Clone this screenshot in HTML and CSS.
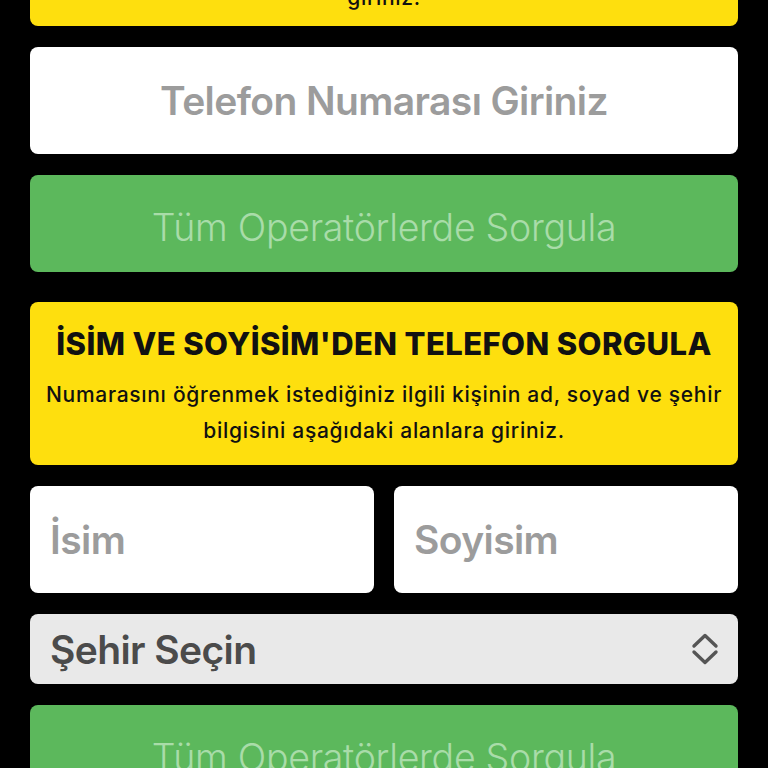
FILE: index.html
```html
<!DOCTYPE html>
<html lang="tr">
<head>
<meta charset="utf-8">
<title>Telefon Sorgula</title>
<link rel="stylesheet" href="styles.css">
</head>
<body>
<main class="page">
  <section class="card card-top">
    <h2 class="card-title">TELEFON NUMARASINDAN SORGULA</h2>
    <p class="card-text">Sorgulamak istediğiniz telefon numarasını aşağıdaki alana<br>giriniz.</p>
  </section>

  <input class="field field-center" type="text" placeholder="Telefon Numarası Giriniz">
  <button class="btn" type="button">Tüm Operatörlerde Sorgula</button>

  <section class="card card-second">
    <h2 class="card-title">İSİM VE SOYİSİM'DEN TELEFON SORGULA</h2>
    <p class="card-text">Numarasını öğrenmek istediğiniz ilgili kişinin ad, soyad ve şehir<br>bilgisini aşağıdaki alanlara giriniz.</p>
  </section>

  <div class="row">
    <input class="field" type="text" placeholder="İsim">
    <input class="field" type="text" placeholder="Soyisim">
  </div>

  <div class="select">
    <select class="select-input">
      <option>Şehir Seçin</option>
    </select>
    <svg class="select-icon" width="30" height="32" viewBox="0 0 30 32" aria-hidden="true">
      <path d="M4 13 L15 2.5 L26 13" fill="none" stroke="#555" stroke-width="3.4" stroke-linecap="round" stroke-linejoin="round"/>
      <path d="M4 19 L15 29.5 L26 19" fill="none" stroke="#555" stroke-width="3.4" stroke-linecap="round" stroke-linejoin="round"/>
    </svg>
  </div>

  <button class="btn" type="button">Tüm Operatörlerde Sorgula</button>
</main>
</body>
</html>
```

FILE: styles.css
```css
html, body {
  margin: 0;
  padding: 0;
  background: #000;
}

body {
  overflow: hidden;
  height: 768px;
}

.page {
  display: flex;
  flex-direction: column;
  gap: 21px;
  padding: 0 30px;
  margin-top: -131px;
}

.card {
  background: #fedf0e;
  border-radius: 8px;
  padding: 22px 4px 16px;
  text-align: center;
  color: #111;
  font-family: Inter, "Open Sans", sans-serif;
}

.card-top {
  padding-bottom: 10px;
}

.card-second {
  margin-top: 9px;
}

.card-title {
  margin: 0 0 13px;
  font-size: 31px;
  line-height: 40px;
  font-weight: 800;
  letter-spacing: 0.4px;
}

.card-text {
  margin: 0;
  font-size: 21px;
  line-height: 36px;
  font-weight: 500;
  letter-spacing: 0.7px;
}

.field {
  display: block;
  box-sizing: border-box;
  width: 100%;
  height: 107px;
  border: 0;
  border-radius: 8px;
  background: #fff;
  padding: 0 20px;
  font-family: Inter, "Open Sans", sans-serif;
  font-size: 39px;
  font-weight: 600;
  letter-spacing: -0.6px;
  color: #333;
  outline: none;
}

.field::placeholder {
  color: #9c9c9c;
  opacity: 1;
}

.field-center {
  text-align: center;
}

.row {
  display: grid;
  grid-template-columns: 1fr 1fr;
  gap: 20px;
}

.btn {
  display: block;
  width: 100%;
  height: 97px;
  border: 0;
  border-radius: 8px;
  background: #5cb85c;
  color: #a9dca9;
  font-family: Inter, Roboto, sans-serif;
  font-size: 37.5px;
  font-weight: 300;
  letter-spacing: -0.3px;
  padding: 8px 0 0;
}

.select {
  display: flex;
  align-items: center;
  height: 70px;
  border-radius: 8px;
  background: #e9e9e9;
  padding: 0 18px 0 0;
}

.select-input {
  flex: 1;
  height: 100%;
  appearance: none;
  -webkit-appearance: none;
  border: 0;
  background: transparent;
  padding: 0 20px;
  font-family: Inter, "Open Sans", sans-serif;
  font-size: 39px;
  font-weight: 600;
  letter-spacing: -0.6px;
  color: #4b4b4b;
  outline: none;
}

.select-icon {
  display: block;
  flex: none;
}
```
